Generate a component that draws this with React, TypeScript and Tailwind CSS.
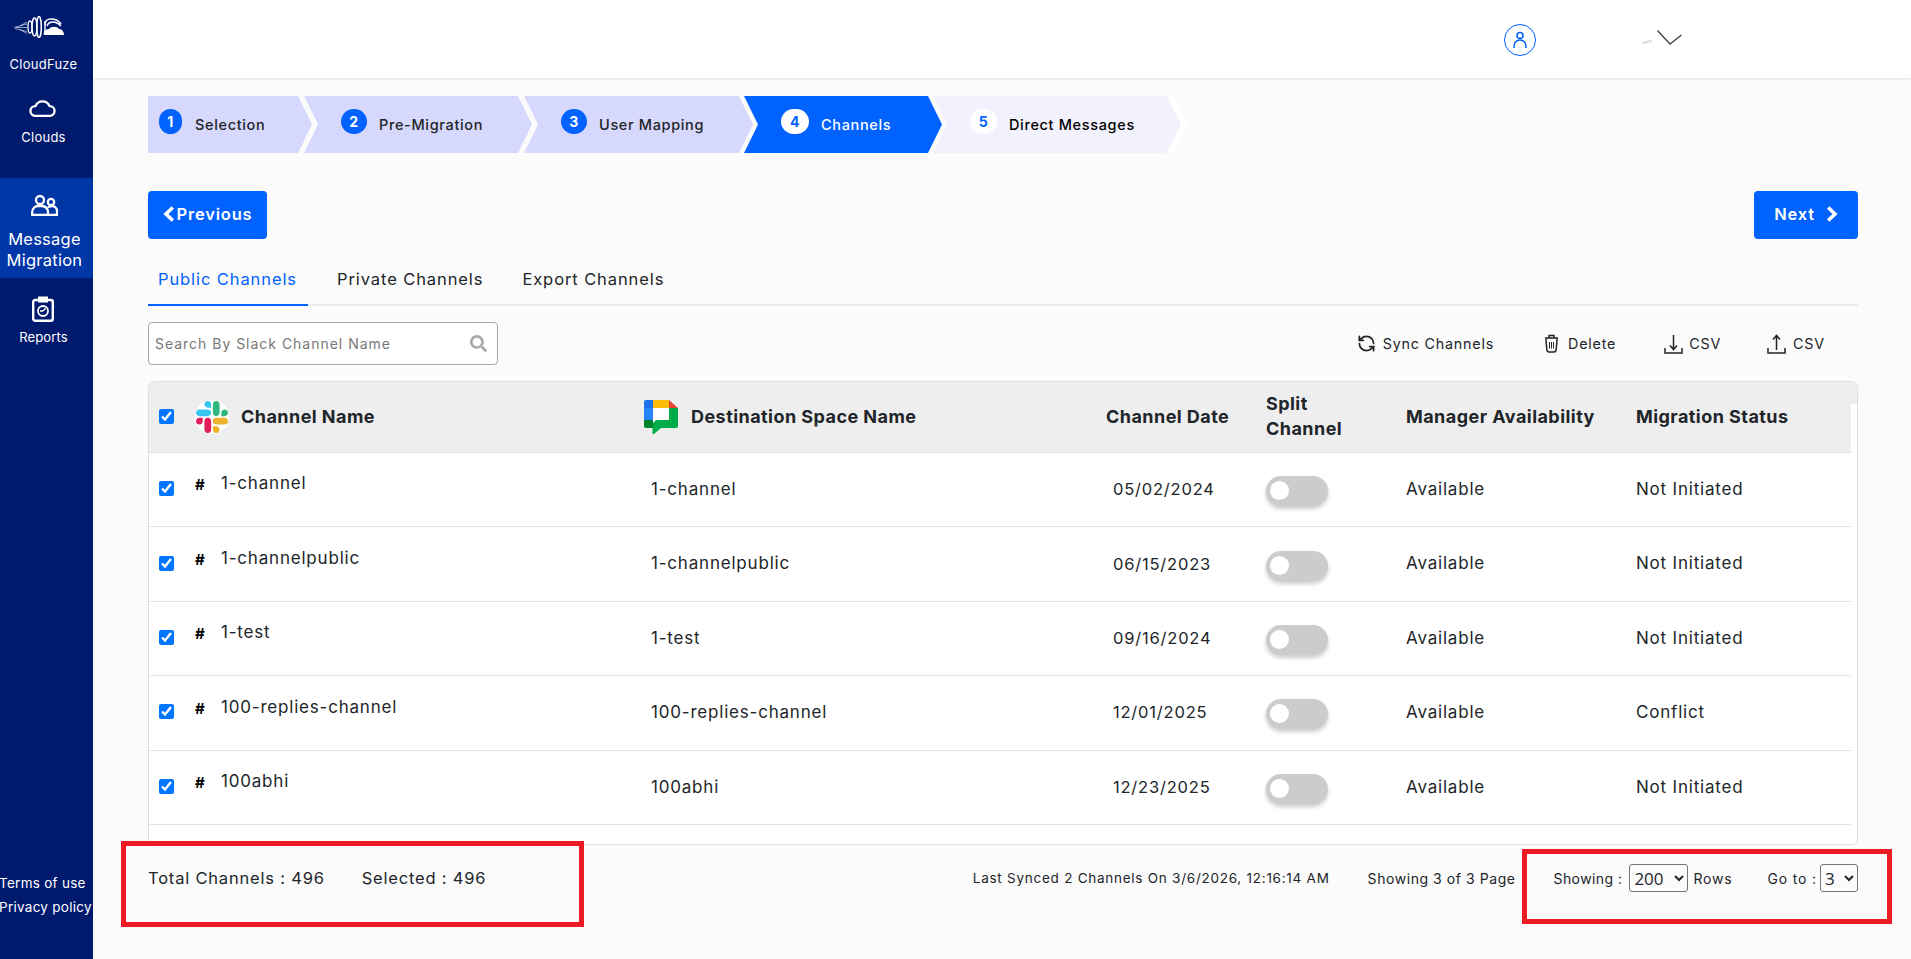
import { FaSearch } from "react-icons/fa";
import { RefreshCcw } from "lucide-react";

const steps = [
  { n: 1, label: "Selection", w: "w-[164px]", circle: "w-[23px] ml-[11px]", gap: "ml-[13px]" },
  { n: 2, label: "Pre-Migration", w: "w-[228px]", circle: "w-[26px] ml-[37px]", gap: "ml-[12px]" },
  { n: 3, label: "User Mapping", w: "w-[229px]", circle: "w-[26px] ml-[37px]", gap: "ml-[12px]" },
];

const rows = [
  { name: "1-channel", date: "05/02/2024", status: "Not Initiated" },
  { name: "1-channelpublic", date: "06/15/2023", status: "Not Initiated" },
  { name: "1-test", date: "09/16/2024", status: "Not Initiated" },
  { name: "100-replies-channel", date: "12/01/2025", status: "Conflict" },
  { name: "100abhi", date: "12/23/2025", status: "Not Initiated" },
];

const gridCols = "grid grid-cols-[46px_449px_456px_166px_140px_230px_215px]";

const CloudFuzeLogo = () => (
  <svg viewBox="0 0 50 22" className="w-[50px] h-[22px] -ml-[16px]" fill="none" stroke="white">
    <path d="M0 11.500L13 8M2 11.500h11M1 12.500l12 3M6 10l7-4M6 13.500l7 4" strokeWidth="0.6" />
    <ellipse cx="16" cy="11" rx="2" ry="6" strokeWidth="1.300" />
    <ellipse cx="20.500" cy="11" rx="2.500" ry="9" strokeWidth="1.400" />
    <ellipse cx="25" cy="11" rx="2.300" ry="10.500" strokeWidth="1.500" />
    <path d="M31 9c0-4 2-6 6-6 4 0 8 2 10 5M33 10c1-3 3-4 6-4 3 0 5 1 8 4" strokeWidth="1.400" />
    <path d="M30 19c-1-3 1-6 5-6 2-3 8-3 10 0 3 0 5 3 5 6z" fill="white" stroke="none" />
    <path d="M31 5v13" strokeWidth="1.400" />
  </svg>
);

const SlackLogo = () => (
  <div className="w-[34px] h-[34px] rounded-full bg-white flex items-center justify-center shrink-0">
    <svg viewBox="0 0 122.800 122.800" className="w-[32px] h-[32px]">
      <path fill="#E01E5A" d="M25.800 77.600c0 7.100-5.800 12.900-12.900 12.900S0 84.700 0 77.600s5.800-12.900 12.900-12.900h12.900v12.900zM32.300 77.600c0-7.100 5.800-12.900 12.900-12.900s12.900 5.800 12.900 12.900v32.300c0 7.100-5.800 12.900-12.900 12.900s-12.900-5.800-12.900-12.900V77.600z" />
      <path fill="#36C5F0" d="M45.200 25.800c-7.100 0-12.900-5.800-12.900-12.900S38.100 0 45.200 0s12.900 5.800 12.900 12.900v12.900H45.200zM45.200 32.300c7.100 0 12.900 5.800 12.900 12.900s-5.800 12.900-12.900 12.900H12.900C5.800 58.100 0 52.300 0 45.200s5.800-12.900 12.900-12.900h32.300z" />
      <path fill="#2EB67D" d="M97 45.200c0-7.100 5.800-12.900 12.900-12.900s12.900 5.800 12.900 12.900-5.800 12.900-12.900 12.900H97V45.200zM90.500 45.200c0 7.100-5.800 12.900-12.900 12.900s-12.900-5.800-12.900-12.900V12.900C64.700 5.800 70.500 0 77.600 0s12.900 5.800 12.900 12.900v32.300z" />
      <path fill="#ECB22E" d="M77.600 97c7.100 0 12.900 5.800 12.900 12.900s-5.800 12.900-12.900 12.900-12.900-5.800-12.900-12.900V97h12.900zM77.600 90.500c-7.100 0-12.900-5.800-12.900-12.900s5.800-12.900 12.900-12.900h32.300c7.100 0 12.900 5.800 12.900 12.900s-5.800 12.900-12.900 12.900H77.600z" />
    </svg>
  </div>
);

const ChatLogo = () => (
  <svg viewBox="0 0 34 34" className="w-[34px] h-[34px] shrink-0">
    <path fill="#1A73E8" d="M2 0h7v8H0V2a2 2 0 0 1 2-2z" />
    <rect x="9" width="16" height="8" fill="#FBBC04" />
    <path fill="#EA4335" d="M25 0l9 8h-9z" />
    <rect y="8" width="9" height="12" fill="#2684FC" />
    <path fill="#00832D" d="M0 20h9v8H2a2 2 0 0 1-2-2z" />
    <path fill="#00AC47" d="M25 8h9v18a2 2 0 0 1-2 2H17l-7 6H8.500v-6H9v-8h16z" />
    <path fill="#fff" d="M9 8h16v12H12l-3 3z" />
  </svg>
);

const UsersIcon = () => (
  <svg viewBox="0 0 27 21" className="w-[27px] h-[21px] -ml-[4px]" fill="none" stroke="white" strokeWidth="2.300">
    <circle cx="9" cy="5" r="4" />
    <circle cx="20" cy="7" r="3.200" />
    <path d="M1.200 20v-3a6 6 0 0 1 6-6h4a6 6 0 0 1 5 9zM17 12.500c1-1 2-1.500 4-1.500a5 5 0 0 1 5 5v4h-10" strokeLinejoin="round" />
  </svg>
);

const ReportsIcon = () => (
  <svg viewBox="0 0 22 26" className="w-[22px] h-[26px] -ml-[7px]" fill="none" stroke="white" strokeWidth="2.400">
    <rect x="1.200" y="4" width="19.600" height="20.800" rx="2" />
    <path d="M7 1.500h8v4H7z" fill="white" strokeWidth="2" />
    <circle cx="11" cy="15" r="5" strokeWidth="1.800" />
    <path d="M11 15l2.500-2.500M11 15h-3" strokeWidth="1.500" />
  </svg>
);

const CloudIcon = () => (
  <svg viewBox="0 0 27 17" className="w-[27px] h-[17px] -ml-[8px]" fill="none" stroke="white" strokeWidth="2.300" strokeLinejoin="round">
    <path d="M6 15.800a4.800 4.800 0 0 1 .5-9.600 7.500 7.500 0 0 1 14 0 4.800 4.800 0 0 1 .5 9.600z" />
  </svg>
);

const ChevronThick = ({ left, className }: { left?: boolean; className?: string }) => (
  <svg viewBox="0 0 12 16" className={`w-[12px] h-[16px] ${className ?? ""}`} fill="none" stroke="white" strokeWidth="3.600">
    <path d={left ? "M9.800 1.500L3 8l6.800 6.500" : "M2.200 1.500L9 8l-6.800 6.500"} />
  </svg>
);

const TrashIcon = () => (
  <svg viewBox="0 0 15 19" className="w-[15px] h-[19px]" fill="none" stroke="#212529" strokeWidth="1.500">
    <path d="M1 4h13M5 4V1.500h5V4" />
    <path d="M2 4.500c0 4 .5 8 1 12 .2 1 1 1.500 2 1.500h5c1 0 1.800-.5 2-1.500.5-4 1-8 1-12" />
    <path d="M5.500 8v6.500M7.500 8v6.500M9.500 8v6.500" strokeWidth="1" />
  </svg>
);

const TrayArrow = ({ up }: { up?: boolean }) => (
  <svg viewBox="0 0 19 20" className="w-[19px] h-[20px]" fill="none" stroke="#212529" strokeWidth="1.500">
    <path d="M1 14v5h17v-5" />
    {up ? <path d="M9.500 16V2M6 5.500l3.500-4 3.500 4" /> : <path d="M9.500 1v14M6 11.500l3.500 4 3.500-4" />}
  </svg>
);

const Toggle = () => (
  <div className="relative mt-[3px] w-[62px] h-[30px] rounded-full bg-[#cccccc] shadow-[0_3px_4px_rgba(0,0,0,0.2)]">
    <div className="absolute left-[4px] top-[5px] w-[19px] h-[19px] rounded-full bg-white" />
  </div>
);

const StepNumber = ({ n, className }: { n: number; className: string }) => (
  <div className={`h-[25px] rounded-full flex items-center justify-center text-[14px] font-bold mb-[7px] ${className}`}>{n}</div>
);

export default function App() {
  return (
    <div className="relative flex w-[1911px] h-[959px] overflow-hidden bg-[#fbfbfb] text-[#212529] font-['Inter',sans-serif] tracking-[0.05em]">
      {/* Sidebar */}
      <aside className="w-[93px] shrink-0 bg-[#001a6e] text-white flex flex-col tracking-normal">
        <div className="h-[78px] pt-[16px] flex flex-col items-center">
          <CloudFuzeLogo />
          <div className="text-[13px] mt-[17px] leading-[18px] tracking-[0.02em] -ml-[6px]">CloudFuze</div>
        </div>
        <div className="h-[100px] pt-[22px] flex flex-col items-center">
          <CloudIcon />
          <div className="text-[13px] mt-[11px] leading-[18px] tracking-[0.02em] -ml-[6px]">Clouds</div>
        </div>
        <div className="h-[100px] pt-[17px] bg-[#0036a6] flex flex-col items-center">
          <UsersIcon />
          <div className="text-[16.5px] mt-[13px] leading-[21px] text-center tracking-[0.015em] -ml-[4px]">Message<br />Migration</div>
        </div>
        <div className="pt-[18px] flex flex-col items-center">
          <ReportsIcon />
          <div className="text-[13px] mt-[6px] leading-[18px] tracking-[0.01em] -ml-[6px]">Reports</div>
        </div>
        <div className="mt-auto pb-[40px] text-[13.5px] leading-[24px] whitespace-nowrap tracking-[0.02em] -ml-[1px]">
          <div>Terms of use</div>
          <div>Privacy policy</div>
        </div>
      </aside>

      <main className="flex-1 flex flex-col min-w-0">
        {/* Top bar */}
        <header className="h-[78px] shrink-0 bg-white shadow-[0_1px_3px_rgba(0,0,0,0.1)] flex items-center pl-[1411px]">
          <svg viewBox="0 0 32 32" className="w-[32px] h-[32px] mt-[1px]" fill="none" stroke="#0062ff">
            <circle cx="16" cy="16" r="15.500" strokeWidth="1" />
            <circle cx="16" cy="11.500" r="3" strokeWidth="1.500" />
            <path d="M10 24v-2a6 6 0 0 1 12 0v2" strokeWidth="1.500" />
          </svg>
          <div className="ml-[106px] w-[10px] h-[2px] bg-[#dcdcdc] rotate-[-15deg] mt-[6px] blur-[0.5px]" />
          <svg viewBox="0 0 25 15" className="ml-[5px] w-[25px] h-[15px] -mt-[3px]" fill="none" stroke="#444" strokeWidth="1.300">
            <path d="M0.500 0.500L13 14 24.500 5" />
          </svg>
        </header>

        <div className="pl-[55px] pr-[53px] flex-1 flex flex-col">
          {/* Stepper */}
          <div className="flex mt-[18px] h-[57px] text-[14.5px] font-medium tracking-[0.045em]">
            {steps.map((s, i) => (
              <div
                key={s.n}
                className={`${s.w} bg-[#d6d8fd] flex items-center ${i === 0 ? "[clip-path:polygon(0_0,calc(100%-14px)_0,100%_50%,calc(100%-14px)_100%,0_100%)]" : "-ml-[8px] [clip-path:polygon(0_0,calc(100%-14px)_0,100%_50%,calc(100%-14px)_100%,0_100%,14px_50%)]"}`}
              >
                <StepNumber n={s.n} className={`${s.circle} bg-[#0062ff] text-white`} />
                <span className={s.gap}>{s.label}</span>
              </div>
            ))}
            <div className="w-[198px] -ml-[9px] bg-[#0062ff] text-white flex items-center [clip-path:polygon(0_0,calc(100%-14px)_0,100%_50%,calc(100%-14px)_100%,0_100%,14px_50%)]">
              <StepNumber n={4} className="w-[28px] ml-[37px] bg-white text-[#0062ff]" />
              <span className="ml-[12px]">Channels</span>
            </div>
            <div className="w-[254px] -ml-[9px] bg-white [clip-path:polygon(0_0,calc(100%-14px)_0,100%_50%,calc(100%-14px)_100%,0_100%,14px_50%)]">
              <div className="w-[248px] h-full bg-[#f2f2ff] text-black flex items-center [clip-path:polygon(0_0,calc(100%-14px)_0,100%_50%,calc(100%-14px)_100%,0_100%,14px_50%)]">
                <StepNumber n={5} className="w-[27px] ml-[37px] bg-white text-[#0062ff]" />
                <span className="ml-[12px]">Direct Messages</span>
              </div>
            </div>
          </div>

          {/* Previous / Next */}
          <div className="flex justify-between mt-[38px]">
            <button className="w-[119px] h-[48px] rounded-[4px] bg-[#0062ff] text-white flex items-center justify-center text-[16.5px] font-semibold pb-[2px]">
              <ChevronThick left />
              <span className="ml-[2px]">Previous</span>
            </button>
            <button className="w-[104px] h-[48px] rounded-[4px] bg-[#0062ff] text-white flex items-center justify-center text-[16.5px] font-semibold pb-[2px]">
              <span>Next</span>
              <ChevronThick className="ml-[11px]" />
            </button>
          </div>

          {/* Tabs */}
          <div className="mt-[15px] h-[52px] flex border-b-2 border-[#ebebf2] text-[16.5px] tracking-[0.055em]">
            <div className="w-[160px] h-[52px] pl-[10px] flex items-center text-[#0062ff] border-b-2 border-[#0062ff]">Public Channels</div>
            <div className="ml-[29px] h-[50px] flex items-center">Private Channels</div>
            <div className="ml-[39px] h-[50px] flex items-center">Export Channels</div>
          </div>

          {/* Search + actions */}
          <div className="mt-[16px] h-[43px] flex items-center">
            <div className="w-[350px] h-[43px] bg-white border border-[#a8a8a8] rounded-[4px] flex items-center pl-[6px] pr-[10px]">
              <span className="flex-1 text-[14px] tracking-[0.07em] text-[#777]">Search By Slack Channel Name</span>
              <FaSearch className="w-[17px] h-[17px] text-[#a9a9a9]" />
            </div>
            <div className="ml-auto pr-[33px] flex items-center text-[14.3px]">
              <RefreshCcw className="w-[19px] h-[19px]" strokeWidth={2.2} />
              <span className="ml-[7px]">Sync Channels</span>
              <span className="ml-[50px]"><TrashIcon /></span>
              <span className="ml-[9px]">Delete</span>
              <span className="ml-[48px]"><TrayArrow /></span>
              <span className="ml-[6px]">CSV</span>
              <span className="ml-[46px]"><TrayArrow up /></span>
              <span className="ml-[7px]">CSV</span>
            </div>
          </div>

          {/* Table */}
          <div className="mt-[16px] h-[464px] border border-[#dfdfdf] rounded-[6px] bg-white overflow-hidden flex">
            <div className="w-[1702px] shrink-0">
              <div className={`${gridCols} h-[71px] bg-[#eeeeee] border-b border-[#dedede] items-center text-[18px] font-bold tracking-[0.025em]`}>
                <div className="pl-[10px] flex items-center pb-[2px]">
                  <input type="checkbox" defaultChecked className="w-[15px] h-[15px] m-0" />
                </div>
                <div className="flex items-center gap-[12px]">
                  <SlackLogo />
                  <span className="pb-[2px]">Channel Name</span>
                </div>
                <div className="flex items-center gap-[13px]">
                  <ChatLogo />
                  <span className="pb-[2px]">Destination Space Name</span>
                </div>
                <div className="pl-[6px] pb-[2px]">Channel Date</div>
                <div className="leading-[25px] pb-[2px]">Split<br />Channel</div>
                <div className="pb-[2px]">Manager Availability</div>
                <div className="pb-[2px]">Migration Status</div>
              </div>
              {rows.map((r) => (
                <div key={r.name} className={`${gridCols} h-[74.4px] border-b border-[#e2e2e2] items-center text-[17px]`}>
                  <div className="pl-[10px] flex items-center pb-[2px]">
                    <input type="checkbox" defaultChecked className="w-[15px] h-[15px] m-0" />
                  </div>
                  <div className="flex items-center pb-[11px]">
                    <span className="w-[26px] font-bold text-black text-[15px] pt-[3px]">#</span>
                    <span>{r.name}</span>
                  </div>
                  <div className="pl-[7px]">{r.name}</div>
                  <div className="pl-[13px] text-[16.5px]">{r.date}</div>
                  <div><Toggle /></div>
                  <div>Available</div>
                  <div>{r.status}</div>
                </div>
              ))}
            </div>
            <div className="flex-1">
              <div className="h-[22px] bg-[#eeeeee]" />
            </div>
          </div>

          {/* Footer */}
          <div className="h-[66px] flex items-center">
            <span className="text-[16.5px]">Total Channels : 496</span>
            <span className="ml-[37px] text-[16.5px]">Selected : 496</span>
            <div className="ml-auto flex items-center text-[14px] tracking-[0.04em]">
              <span className="text-[13.5px] tracking-[0.055em]">Last Synced 2 Channels On 3/6/2026, 12:16:14 AM</span>
              <span className="ml-[38px]">Showing 3 of 3 Page</span>
              <span className="ml-[38px] tracking-[0.03em]">Showing :</span>
              <select defaultValue="200" className="ml-[7px] w-[59px] h-[28px] border border-[#767676] rounded-[3px] text-[17px] tracking-normal font-['Open_Sans',sans-serif]">
                <option>200</option>
              </select>
              <span className="ml-[5px] tracking-[0.06em]">Rows</span>
              <span className="ml-[35px] tracking-[0.06em]">Go to :</span>
              <select defaultValue="3" className="ml-[3px] w-[38px] h-[28px] border border-[#767676] rounded-[3px] text-[17px] tracking-normal font-['Open_Sans',sans-serif]">
                <option>3</option>
              </select>
            </div>
          </div>
        </div>
      </main>

      {/* Red annotation boxes drawn over the screenshot */}
      <div className="absolute left-[121px] top-[841px] w-[463px] h-[86px] border-[5px] border-[#ed1c24]" />
      <div className="absolute left-[1522px] top-[849px] w-[370px] h-[75px] border-[5px] border-[#ed1c24]" />
    </div>
  );
}
